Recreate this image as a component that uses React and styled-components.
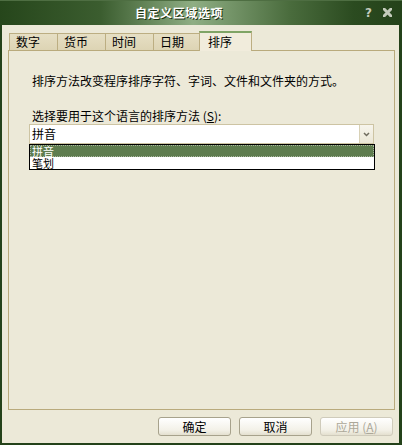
import React from "react";
import styled, { createGlobalStyle, css } from "styled-components";

const GlobalStyle = createGlobalStyle`
  body {
    margin: 0;
    font-family: "Noto Sans CJK SC", "Liberation Sans", sans-serif;
    font-size: 12px;
    color: #000000;
  }
`;

const Window = styled.div`
  width: 402px;
  height: 445px;
  display: flex;
  flex-direction: column;
  background-color: #ece9d8;
  overflow: hidden;
`;

const TitleBar = styled.div`
  height: 25px;
  display: flex;
  align-items: center;
  background: linear-gradient(
    90deg,
    #26461b 0%,
    #3b5d2f 25%,
    #8fae84 48%,
    #4a6c3d 72%,
    #2b4b20 88%,
    #24421a 100%
  );
  box-shadow: inset 0 1px 0 #4e6e42;
`;

const TitleText = styled.div`
  flex: 1;
  text-align: center;
  padding-left: 2px;
  color: #ffffff;
  font-weight: bold;
  font-size: 12px;
  letter-spacing: 0.6px;
  text-shadow: 1px 1px 0 #1b3212;
`;

const TitleButtons = styled.div`
  width: 46px;
  display: flex;
  align-items: center;
  gap: 11px;
  padding-left: 9px;
  box-sizing: border-box;
`;

const HelpGlyph = styled.span`
  color: #c3cbbb;
  font-family: "DejaVu Sans", sans-serif;
  font-weight: bold;
  font-size: 12px;
  line-height: 12px;
`;

const Frame = styled.div`
  flex: 1;
  display: flex;
  flex-direction: column;
  border-left: 2px solid #24421a;
  border-right: 3px solid #24421a;
  border-bottom: 2px solid #24421a;
  padding: 6px 4px 0 6px;
`;

const TabStrip = styled.div`
  height: 19px;
  display: flex;
  align-items: flex-end;
  padding-left: 2px;
`;

const Tab = styled.div`
  box-sizing: border-box;
  width: ${({ $w }) => $w}px;
  height: 17px;
  padding-left: 6px;
  line-height: 16px;
  background: linear-gradient(#e6dfc4, #ddd4b4);
  border: 1px solid #bcae82;
  border-bottom: none;
  margin-left: -1px;
  ${({ $active }) =>
    $active &&
    css`
      position: relative;
      z-index: 1;
      height: 20px;
      margin-bottom: -1px;
      padding-left: 8px;
      line-height: 17px;
      background: #f1ecdc;
      border-top: 2px solid #7fa465;
    `}
`;

const Panel = styled.div`
  box-sizing: border-box;
  height: 360px;
  border: 1px solid #b9aa7c;
  padding: 23px 20px 0 23px;
  display: flex;
  flex-direction: column;
`;

const Line = styled.div`
  line-height: 14px;
  margin-bottom: ${({ $gap }) => $gap || 0}px;
  white-space: nowrap;
`;

const Key = styled.span`
  text-decoration: underline;
`;

const Combo = styled.div`
  box-sizing: border-box;
  width: 345px;
  height: 20px;
  margin: 1px 0 0 -3px;
  display: flex;
  background: #ffffff;
  border: 1px solid #cdc4a3;
`;

const ComboText = styled.div`
  flex: 1;
  padding-left: 2px;
  line-height: 18px;
`;

const ComboButton = styled.div`
  width: 13px;
  display: flex;
  align-items: center;
  justify-content: center;
  background: linear-gradient(#f7f5ec, #ebe7d6);
  border-left: 1px solid #d8d1b6;
`;

const List = styled.div`
  box-sizing: border-box;
  width: 346px;
  height: 26px;
  margin-left: -3px;
  background: #ffffff;
  border: 1px solid #000000;
`;

const Item = styled.div`
  box-sizing: border-box;
  height: 12px;
  padding-left: 1px;
  font-size: 11px;
  line-height: 10px;
  border: 1px solid transparent;
  ${({ $selected }) =>
    $selected &&
    css`
      color: #ffffff;
      background: #5e7c4e;
      border: 1px dotted #a8b49e;
    `}
`;

const ButtonRow = styled.div`
  display: flex;
  justify-content: flex-end;
  gap: 8px;
  padding: 7px 2px 0 0;
`;

const Button = styled.div`
  box-sizing: border-box;
  width: 73px;
  height: 19px;
  text-align: center;
  line-height: 17px;
  border: 1px solid ${({ $disabled }) => ($disabled ? "#cfcbbb" : "#a7a28c")};
  border-radius: 3px;
  background: linear-gradient(#ffffff, #f3f1e8 70%, #e4e0cf);
  color: ${({ $disabled }) => ($disabled ? "#aca899" : "#000000")};
`;

const tabs = [
  { label: "数字", w: 49 },
  { label: "货币", w: 49 },
  { label: "时间", w: 49 },
  { label: "日期", w: 47 },
  { label: "排序", w: 53, active: true },
];

export default function App() {
  return (
    <>
      <GlobalStyle />
      <Window>
        <TitleBar>
          <TitleText>自定义区域选项</TitleText>
          <TitleButtons>
            <HelpGlyph>?</HelpGlyph>
            <svg width="9" height="9" viewBox="0 0 9 9">
              <path
                d="M1 1L8 8M8 1L1 8"
                stroke="#c3cbbb"
                strokeWidth="3"
                strokeLinecap="square"
              />
            </svg>
          </TitleButtons>
        </TitleBar>
        <Frame>
          <TabStrip>
            {tabs.map((t) => (
              <Tab key={t.label} $w={t.w} $active={t.active}>
                {t.label}
              </Tab>
            ))}
          </TabStrip>
          <Panel>
            <Line $gap={21}>排序方法改变程序排序字符、字词、文件和文件夹的方式。</Line>
            <Line>
              选择要用于这个语言的排序方法 (<Key>S</Key>):
            </Line>
            <Combo>
              <ComboText>拼音</ComboText>
              <ComboButton>
                <svg width="7" height="5" viewBox="0 0 7 5">
                  <path
                    d="M1 1L3.5 3.5L6 1"
                    fill="none"
                    stroke="#6f6c5e"
                    strokeWidth="1.5"
                  />
                </svg>
              </ComboButton>
            </Combo>
            <List>
              <Item $selected>拼音</Item>
              <Item>笔划</Item>
            </List>
          </Panel>
          <ButtonRow>
            <Button>确定</Button>
            <Button>取消</Button>
            <Button $disabled>
              应用 (<Key>A</Key>)
            </Button>
          </ButtonRow>
        </Frame>
      </Window>
    </>
  );
}
